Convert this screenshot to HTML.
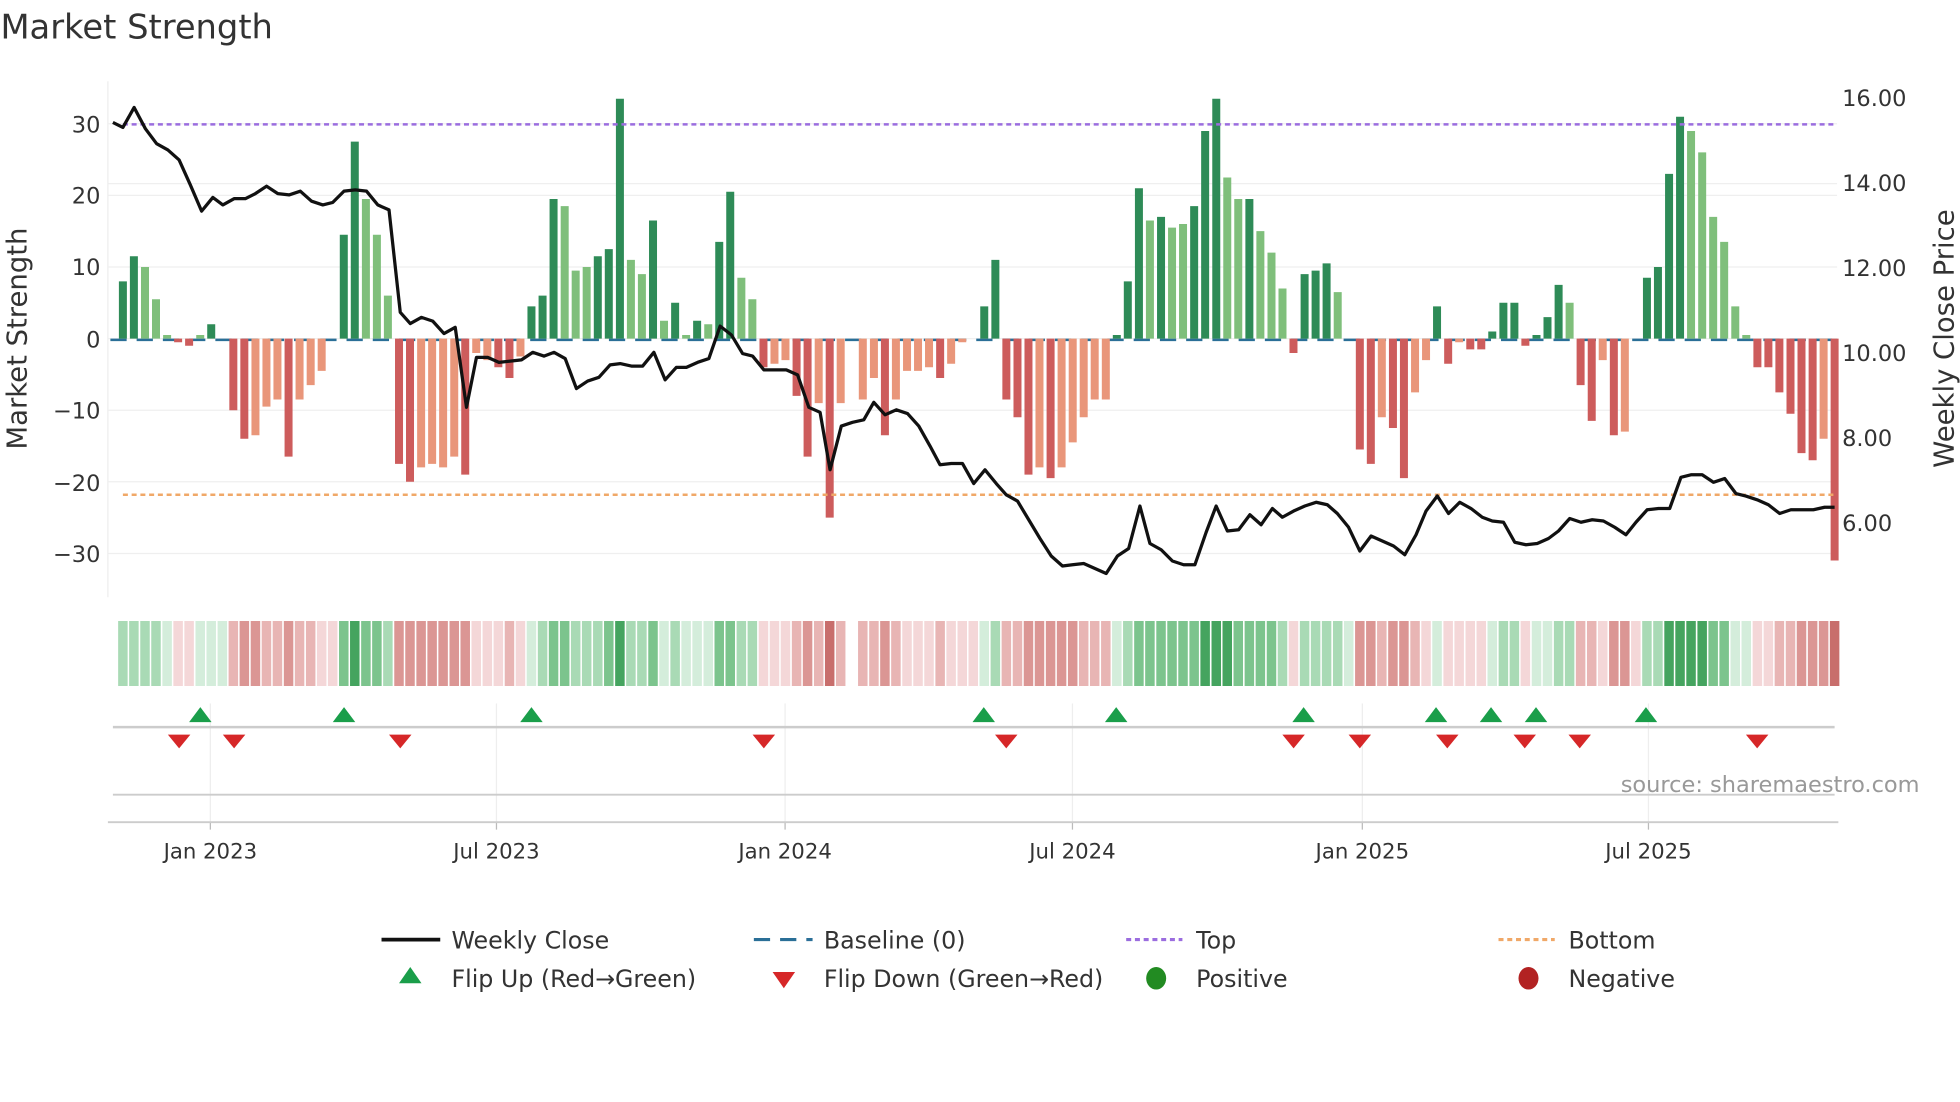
<!DOCTYPE html>
<html><head><meta charset="utf-8">
<style>
html,body{margin:0;padding:0;background:#fff;}
svg{display:block;font-family:"DejaVu Sans","Liberation Sans",sans-serif;}
</style></head>
<body>
<svg width="1960" height="1102" viewBox="0 0 1568 882" xmlns="http://www.w3.org/2000/svg">
<rect width="1568" height="882" fill="#fff"/>
<text x="0" y="31" font-size="27" fill="#333">Market Strength</text>
<g stroke="#efefef" stroke-width="1">
<line x1="86" x2="1470" y1="99" y2="99"/><line x1="86" x2="1470" y1="156.4" y2="156.4"/><line x1="86" x2="1470" y1="213.7" y2="213.7"/><line x1="86" x2="1470" y1="271" y2="271"/><line x1="86" x2="1470" y1="328.3" y2="328.3"/><line x1="86" x2="1470" y1="385.6" y2="385.6"/><line x1="86" x2="1470" y1="443" y2="443"/>
<line x1="86" x2="1470" y1="147" y2="147"/>
</g>
<g stroke="#eee" stroke-width="1">
<line x1="168" x2="168" y1="563" y2="658"/><line x1="397" x2="397" y1="563" y2="658"/><line x1="628" x2="628" y1="563" y2="658"/><line x1="858" x2="858" y1="563" y2="658"/><line x1="1090" x2="1090" y1="563" y2="658"/><line x1="1319" x2="1319" y1="563" y2="658"/>
</g>
<g stroke="#bbb" stroke-width="1">
<line x1="168" x2="168" y1="658" y2="664"/><line x1="397" x2="397" y1="658" y2="664"/><line x1="628" x2="628" y1="658" y2="664"/><line x1="858" x2="858" y1="658" y2="664"/><line x1="1090" x2="1090" y1="658" y2="664"/><line x1="1319" x2="1319" y1="658" y2="664"/>
</g>
<line x1="86" y1="65" x2="86" y2="478" stroke="#eee" stroke-width="1"/>
<line x1="88" x2="1470" y1="272" y2="272" stroke="#2a6f97" stroke-width="2" stroke-dasharray="13 8"/>

<path fill="#2e8b57" d="M94.8 225.2h6.4V271h-6.4z M103.6 205.1h6.4V271h-6.4z M165.5 259.5h6.4V271h-6.4z M271.6 187.9h6.4V271h-6.4z M280.4 113.4h6.4V271h-6.4z M421.8 245.2h6.4V271h-6.4z M430.7 236.6h6.4V271h-6.4z M439.5 159.3h6.4V271h-6.4z M474.9 205.1h6.4V271h-6.4z M483.7 199.4h6.4V271h-6.4z M492.6 79h6.4V271h-6.4z M519.1 176.5h6.4V271h-6.4z M536.8 242.3h6.4V271h-6.4z M554.4 256.7h6.4V271h-6.4z M572.1 193.6h6.4V271h-6.4z M580.9 153.5h6.4V271h-6.4z M784.2 245.2h6.4V271h-6.4z M793.1 208h6.4V271h-6.4z M890.3 268.1h6.4V271h-6.4z M899.1 225.2h6.4V271h-6.4z M908 150.7h6.4V271h-6.4z M925.7 173.6h6.4V271h-6.4z M952.2 165h6.4V271h-6.4z M961 104.8h6.4V271h-6.4z M969.9 79h6.4V271h-6.4z M996.4 159.3h6.4V271h-6.4z M1040.6 219.4h6.4V271h-6.4z M1049.4 216.6h6.4V271h-6.4z M1058.2 210.8h6.4V271h-6.4z M1146.6 245.2h6.4V271h-6.4z M1190.8 265.3h6.4V271h-6.4z M1199.7 242.3h6.4V271h-6.4z M1208.5 242.3h6.4V271h-6.4z M1226.2 268.1h6.4V271h-6.4z M1235 253.8h6.4V271h-6.4z M1243.9 228h6.4V271h-6.4z M1314.6 222.3h6.4V271h-6.4z M1323.4 213.7h6.4V271h-6.4z M1332.3 139.2h6.4V271h-6.4z M1341.1 93.4h6.4V271h-6.4z"/>
<path fill="#7fbf7b" d="M112.5 213.7h6.4V271h-6.4z M121.3 239.5h6.4V271h-6.4z M130.2 268.1h6.4V271h-6.4z M156.7 268.1h6.4V271h-6.4z M289.3 159.3h6.4V271h-6.4z M298.1 187.9h6.4V271h-6.4z M306.9 236.6h6.4V271h-6.4z M448.4 165h6.4V271h-6.4z M457.2 216.6h6.4V271h-6.4z M466 213.7h6.4V271h-6.4z M501.4 208h6.4V271h-6.4z M510.2 219.4h6.4V271h-6.4z M527.9 256.7h6.4V271h-6.4z M545.6 268.1h6.4V271h-6.4z M563.3 259.5h6.4V271h-6.4z M589.8 222.3h6.4V271h-6.4z M598.6 239.5h6.4V271h-6.4z M916.8 176.5h6.4V271h-6.4z M934.5 182.2h6.4V271h-6.4z M943.3 179.3h6.4V271h-6.4z M978.7 142.1h6.4V271h-6.4z M987.5 159.3h6.4V271h-6.4z M1005.2 185h6.4V271h-6.4z M1014.1 202.2h6.4V271h-6.4z M1022.9 230.9h6.4V271h-6.4z M1067.1 233.8h6.4V271h-6.4z M1252.7 242.3h6.4V271h-6.4z M1349.9 104.8h6.4V271h-6.4z M1358.8 122h6.4V271h-6.4z M1367.6 173.6h6.4V271h-6.4z M1376.4 193.6h6.4V271h-6.4z M1385.3 245.2h6.4V271h-6.4z M1394.1 268.1h6.4V271h-6.4z"/>
<path fill="#cd5c5c" d="M139 271h6.4v2.9h-6.4z M147.8 271h6.4v5.7h-6.4z M183.2 271h6.4v57.3h-6.4z M192 271h6.4v80.2h-6.4z M227.4 271h6.4v94.5h-6.4z M315.8 271h6.4v100.3h-6.4z M324.6 271h6.4v114.6h-6.4z M368.8 271h6.4v108.9h-6.4z M395.3 271h6.4v22.9h-6.4z M404.2 271h6.4v31.5h-6.4z M607.5 271h6.4v22.9h-6.4z M634 271h6.4v45.8h-6.4z M642.8 271h6.4v94.5h-6.4z M660.5 271h6.4v143.3h-6.4z M704.7 271h6.4v77.4h-6.4z M748.9 271h6.4v31.5h-6.4z M801.9 271h6.4v48.7h-6.4z M810.8 271h6.4v63h-6.4z M819.6 271h6.4v108.9h-6.4z M837.3 271h6.4v111.7h-6.4z M1031.7 271h6.4v11.5h-6.4z M1084.8 271h6.4v88.8h-6.4z M1093.6 271h6.4v100.3h-6.4z M1111.3 271h6.4v71.6h-6.4z M1120.1 271h6.4v111.7h-6.4z M1155.5 271h6.4v20.1h-6.4z M1173.2 271h6.4v8.6h-6.4z M1182 271h6.4v8.6h-6.4z M1217.3 271h6.4v5.7h-6.4z M1261.5 271h6.4v37.2h-6.4z M1270.4 271h6.4v65.9h-6.4z M1288.1 271h6.4v77.4h-6.4z M1403 271h6.4v22.9h-6.4z M1411.8 271h6.4v22.9h-6.4z M1420.6 271h6.4v43h-6.4z M1429.5 271h6.4v60.2h-6.4z M1438.3 271h6.4v91.7h-6.4z M1447.2 271h6.4v97.4h-6.4z M1464.8 271h6.4v177.6h-6.4z"/>
<path fill="#e9967a" d="M200.9 271h6.4v77.4h-6.4z M209.7 271h6.4v54.4h-6.4z M218.5 271h6.4v48.7h-6.4z M236.2 271h6.4v48.7h-6.4z M245.1 271h6.4v37.2h-6.4z M253.9 271h6.4v25.8h-6.4z M333.5 271h6.4v103.1h-6.4z M342.3 271h6.4v100.3h-6.4z M351.1 271h6.4v103.1h-6.4z M360 271h6.4v94.5h-6.4z M377.6 271h6.4v11.5h-6.4z M386.5 271h6.4v17.2h-6.4z M413 271h6.4v14.3h-6.4z M616.3 271h6.4v20.1h-6.4z M625.1 271h6.4v17.2h-6.4z M651.7 271h6.4v51.6h-6.4z M669.3 271h6.4v51.6h-6.4z M687 271h6.4v48.7h-6.4z M695.9 271h6.4v31.5h-6.4z M713.5 271h6.4v48.7h-6.4z M722.4 271h6.4v25.8h-6.4z M731.2 271h6.4v25.8h-6.4z M740 271h6.4v22.9h-6.4z M757.7 271h6.4v20.1h-6.4z M766.6 271h6.4v2.9h-6.4z M828.4 271h6.4v103.1h-6.4z M846.1 271h6.4v103.1h-6.4z M855 271h6.4v83.1h-6.4z M863.8 271h6.4v63h-6.4z M872.6 271h6.4v48.7h-6.4z M881.5 271h6.4v48.7h-6.4z M1102.4 271h6.4v63h-6.4z M1129 271h6.4v43h-6.4z M1137.8 271h6.4v17.2h-6.4z M1164.3 271h6.4v2.9h-6.4z M1279.2 271h6.4v17.2h-6.4z M1296.9 271h6.4v74.5h-6.4z M1456 271h6.4v80.2h-6.4z"/>

<line x1="98" y1="99.5" x2="1468" y2="99.5" stroke="#9b6ddf" stroke-width="2" stroke-dasharray="4 3"/>
<line x1="98" y1="396" x2="1468" y2="396" stroke="#f0a868" stroke-width="2" stroke-dasharray="4 3"/>

<path fill="none" stroke="#111" stroke-width="2.6" stroke-linejoin="round" d="M90,98 L98,102 L107,86 L116,103 L125,115 L134,120 L143,128 L152,148 L161,169 L170,158 L178,164 L187,159 L196,159 L204,155 L213,149 L222,155 L231,156 L240,153 L249,161 L258,164 L266,162 L275,153 L284,152 L293,153 L302,164 L311,168 L320,250 L328,259 L337,254 L346,257 L355,267 L364,262 L373,326 L381,286 L390,286 L399,290 L408,289 L417,288 L426,282 L435,285 L443,282 L452,287 L461,311 L470,305 L479,302 L488,292 L496,291 L505,293 L514,293 L523,282 L532,304 L541,294 L549,294 L558,290 L567,287 L576,261 L585,268 L594,283 L602,285 L611,296 L620,296 L629,296 L638,300 L647,326 L656,330 L664,376 L673,341 L682,338 L691,336 L699,322 L708,332 L717,328 L726,331 L735,341 L744,357 L752,372 L761,371 L770,371 L779,387 L788,376 L797,387 L805,396 L814,401 L823,416 L832,431 L841,445 L850,453 L858,452 L867,451 L876,455 L885,459 L894,445 L903,439 L912,405 L920,435 L929,440 L938,449 L947,452 L956,452 L965,426 L973,405 L982,425 L991,424 L1000,412 L1009,420 L1018,407 L1026,414 L1035,409 L1044,405 L1053,402 L1062,404 L1070,411 L1079,422 L1088,441 L1097,429 L1106,433 L1115,437 L1124,444 L1133,428 L1141,409 L1150,397 L1159,411 L1168,402 L1177,407 L1186,414 L1194,417 L1203,418 L1212,434 L1221,436 L1230,435 L1239,431 L1247,425 L1256,415 L1265,418 L1274,416 L1283,417 L1292,422 L1301,428 L1309,418 L1318,408 L1327,407 L1336,407 L1345,382 L1353,380 L1362,380 L1371,386 L1380,383 L1389,395 L1397,397 L1406,400 L1415,404 L1424,411 L1433,408 L1442,408 L1451,408 L1460,406 L1468,406"/>

<!-- heat strip -->
<path fill="#d4eddb" d="M129.6 497h7.6v52h-7.6z M156.1 497h7.6v52h-7.6z M164.9 497h7.6v52h-7.6z M173.8 497h7.6v52h-7.6z M421.2 497h7.6v52h-7.6z M527.3 497h7.6v52h-7.6z M545 497h7.6v52h-7.6z M553.8 497h7.6v52h-7.6z M562.7 497h7.6v52h-7.6z M783.6 497h7.6v52h-7.6z M889.7 497h7.6v52h-7.6z M1075.3 497h7.6v52h-7.6z M1146 497h7.6v52h-7.6z M1190.2 497h7.6v52h-7.6z M1225.6 497h7.6v52h-7.6z M1234.4 497h7.6v52h-7.6z M1384.7 497h7.6v52h-7.6z M1393.5 497h7.6v52h-7.6z"/>
<path fill="#a9dab5" d="M94.2 497h7.6v52h-7.6z M103 497h7.6v52h-7.6z M111.9 497h7.6v52h-7.6z M120.7 497h7.6v52h-7.6z M306.3 497h7.6v52h-7.6z M430.1 497h7.6v52h-7.6z M456.6 497h7.6v52h-7.6z M465.4 497h7.6v52h-7.6z M474.3 497h7.6v52h-7.6z M500.8 497h7.6v52h-7.6z M509.6 497h7.6v52h-7.6z M536.2 497h7.6v52h-7.6z M589.2 497h7.6v52h-7.6z M598 497h7.6v52h-7.6z M792.5 497h7.6v52h-7.6z M898.5 497h7.6v52h-7.6z M1022.3 497h7.6v52h-7.6z M1040 497h7.6v52h-7.6z M1048.8 497h7.6v52h-7.6z M1057.6 497h7.6v52h-7.6z M1066.5 497h7.6v52h-7.6z M1199.1 497h7.6v52h-7.6z M1207.9 497h7.6v52h-7.6z M1243.3 497h7.6v52h-7.6z M1252.1 497h7.6v52h-7.6z M1314 497h7.6v52h-7.6z M1322.8 497h7.6v52h-7.6z"/>
<path fill="#7cc48d" d="M271 497h7.6v52h-7.6z M288.7 497h7.6v52h-7.6z M297.5 497h7.6v52h-7.6z M438.9 497h7.6v52h-7.6z M447.8 497h7.6v52h-7.6z M483.1 497h7.6v52h-7.6z M518.5 497h7.6v52h-7.6z M571.5 497h7.6v52h-7.6z M580.3 497h7.6v52h-7.6z M907.4 497h7.6v52h-7.6z M916.2 497h7.6v52h-7.6z M925.1 497h7.6v52h-7.6z M933.9 497h7.6v52h-7.6z M942.7 497h7.6v52h-7.6z M951.6 497h7.6v52h-7.6z M986.9 497h7.6v52h-7.6z M995.8 497h7.6v52h-7.6z M1004.6 497h7.6v52h-7.6z M1013.5 497h7.6v52h-7.6z M1367 497h7.6v52h-7.6z M1375.8 497h7.6v52h-7.6z"/>
<path fill="#45a45f" d="M279.8 497h7.6v52h-7.6z M492 497h7.6v52h-7.6z M960.4 497h7.6v52h-7.6z M969.3 497h7.6v52h-7.6z M978.1 497h7.6v52h-7.6z M1331.7 497h7.6v52h-7.6z M1340.5 497h7.6v52h-7.6z M1349.3 497h7.6v52h-7.6z M1358.2 497h7.6v52h-7.6z"/>
<path fill="#f4d7d8" d="M138.4 497h7.6v52h-7.6z M147.2 497h7.6v52h-7.6z M253.3 497h7.6v52h-7.6z M262.1 497h7.6v52h-7.6z M377 497h7.6v52h-7.6z M385.9 497h7.6v52h-7.6z M394.7 497h7.6v52h-7.6z M412.4 497h7.6v52h-7.6z M606.9 497h7.6v52h-7.6z M615.7 497h7.6v52h-7.6z M624.5 497h7.6v52h-7.6z M721.8 497h7.6v52h-7.6z M730.6 497h7.6v52h-7.6z M739.4 497h7.6v52h-7.6z M757.1 497h7.6v52h-7.6z M766 497h7.6v52h-7.6z M774.8 497h7.6v52h-7.6z M1031.1 497h7.6v52h-7.6z M1137.2 497h7.6v52h-7.6z M1154.9 497h7.6v52h-7.6z M1163.7 497h7.6v52h-7.6z M1172.6 497h7.6v52h-7.6z M1181.4 497h7.6v52h-7.6z M1216.7 497h7.6v52h-7.6z M1278.6 497h7.6v52h-7.6z M1305.1 497h7.6v52h-7.6z M1402.4 497h7.6v52h-7.6z M1411.2 497h7.6v52h-7.6z"/>
<path fill="#e8b5b4" d="M182.6 497h7.6v52h-7.6z M209.1 497h7.6v52h-7.6z M217.9 497h7.6v52h-7.6z M235.6 497h7.6v52h-7.6z M244.5 497h7.6v52h-7.6z M403.6 497h7.6v52h-7.6z M633.4 497h7.6v52h-7.6z M651.1 497h7.6v52h-7.6z M668.7 497h7.6v52h-7.6z M686.4 497h7.6v52h-7.6z M695.3 497h7.6v52h-7.6z M712.9 497h7.6v52h-7.6z M748.3 497h7.6v52h-7.6z M801.3 497h7.6v52h-7.6z M810.2 497h7.6v52h-7.6z M863.2 497h7.6v52h-7.6z M872 497h7.6v52h-7.6z M880.9 497h7.6v52h-7.6z M1101.8 497h7.6v52h-7.6z M1128.4 497h7.6v52h-7.6z M1260.9 497h7.6v52h-7.6z M1269.8 497h7.6v52h-7.6z M1420 497h7.6v52h-7.6z M1428.9 497h7.6v52h-7.6z"/>
<path fill="#db9694" d="M191.4 497h7.6v52h-7.6z M200.3 497h7.6v52h-7.6z M226.8 497h7.6v52h-7.6z M315.2 497h7.6v52h-7.6z M324 497h7.6v52h-7.6z M332.9 497h7.6v52h-7.6z M341.7 497h7.6v52h-7.6z M350.5 497h7.6v52h-7.6z M359.4 497h7.6v52h-7.6z M368.2 497h7.6v52h-7.6z M642.2 497h7.6v52h-7.6z M704.1 497h7.6v52h-7.6z M819 497h7.6v52h-7.6z M827.8 497h7.6v52h-7.6z M836.7 497h7.6v52h-7.6z M845.5 497h7.6v52h-7.6z M854.4 497h7.6v52h-7.6z M1084.2 497h7.6v52h-7.6z M1093 497h7.6v52h-7.6z M1110.7 497h7.6v52h-7.6z M1119.5 497h7.6v52h-7.6z M1287.5 497h7.6v52h-7.6z M1296.3 497h7.6v52h-7.6z M1437.7 497h7.6v52h-7.6z M1446.6 497h7.6v52h-7.6z M1455.4 497h7.6v52h-7.6z"/>
<path fill="#c86e6c" d="M659.9 497h7.6v52h-7.6z M1464.2 497h7.6v52h-7.6z"/>

<!-- markers -->
<g fill="#1a9e4a">
<polygon points="151,578 169,578 160,566"/><polygon points="266,578 284,578 275,566"/><polygon points="416,578 434,578 425,566"/><polygon points="778,578 796,578 787,566"/><polygon points="884,578 902,578 893,566"/><polygon points="1034,578 1052,578 1043,566"/><polygon points="1140,578 1158,578 1149,566"/><polygon points="1184,578 1202,578 1193,566"/><polygon points="1220,578 1238,578 1229,566"/><polygon points="1308,578 1326,578 1317,566"/>
</g>
<line x1="90" y1="582" x2="1468" y2="582" stroke="#ccc" stroke-width="2"/>
<g fill="#d62728">
<polygon points="134,588 152,588 143,599"/><polygon points="178,588 196,588 187,599"/><polygon points="311,588 329,588 320,599"/><polygon points="602,588 620,588 611,599"/><polygon points="796,588 814,588 805,599"/><polygon points="1026,588 1044,588 1035,599"/><polygon points="1079,588 1097,588 1088,599"/><polygon points="1149,588 1167,588 1158,599"/><polygon points="1211,588 1229,588 1220,599"/><polygon points="1255,588 1273,588 1264,599"/><polygon points="1397,588 1415,588 1406,599"/>
</g>

<g font-size="18" fill="#333" text-anchor="end">
<text x="80" y="106">30</text><text x="80" y="163">20</text><text x="80" y="220">10</text>
<text x="80" y="278">0</text><text x="80" y="335">−10</text><text x="80" y="393">−20</text><text x="80" y="450">−30</text>
</g>
<g font-size="18" fill="#333">
<text x="1474" y="85">16.00</text><text x="1474" y="153">14.00</text><text x="1474" y="221">12.00</text>
<text x="1474" y="289">10.00</text><text x="1474" y="357">8.00</text><text x="1474" y="425">6.00</text>
</g>
<text transform="translate(21,271) rotate(-90)" font-size="22" fill="#333" text-anchor="middle">Market Strength</text>
<text transform="translate(1563,271) rotate(-90)" font-size="22" fill="#333" text-anchor="middle">Weekly Close Price</text>
<text x="1536" y="634" font-size="18" fill="#999" text-anchor="end">source: sharemaestro.com</text>
<line x1="90" y1="636" x2="1468" y2="636" stroke="#ccc" stroke-width="1.5"/>
<line x1="86" y1="658" x2="1471" y2="658" stroke="#ccc" stroke-width="1.5"/>
<g font-size="17" fill="#333" text-anchor="middle">
<text x="168" y="687">Jan 2023</text><text x="397" y="687">Jul 2023</text><text x="628" y="687">Jan 2024</text>
<text x="858" y="687">Jul 2024</text><text x="1090" y="687">Jan 2025</text><text x="1319" y="687">Jul 2025</text>
</g>
<g font-size="19" fill="#333">
<line x1="305" y1="752" x2="352" y2="752" stroke="#111" stroke-width="3"/>
<text x="361" y="759">Weekly Close</text>
<line x1="603" y1="752" x2="650" y2="752" stroke="#2a6f97" stroke-width="2.5" stroke-dasharray="13 8"/>
<text x="659" y="759">Baseline (0)</text>
<line x1="901" y1="752" x2="946" y2="752" stroke="#9b6ddf" stroke-width="2.5" stroke-dasharray="4 3"/>
<text x="957" y="759">Top</text>
<line x1="1199" y1="752" x2="1244" y2="752" stroke="#f0a868" stroke-width="2.5" stroke-dasharray="4 3"/>
<text x="1255" y="759">Bottom</text>
<polygon points="319,787 337,787 328,774" fill="#1a9e4a"/>
<text x="361" y="790">Flip Up (Red→Green)</text>
<polygon points="618,778 636,778 627,791" fill="#d62728"/>
<text x="659" y="790">Flip Down (Green→Red)</text>
<ellipse cx="925" cy="783" rx="8" ry="9" fill="#228b22"/>
<text x="957" y="790">Positive</text>
<ellipse cx="1223" cy="783" rx="8" ry="9" fill="#b22222"/>
<text x="1255" y="790">Negative</text>
</g>
</svg>
</body></html>
